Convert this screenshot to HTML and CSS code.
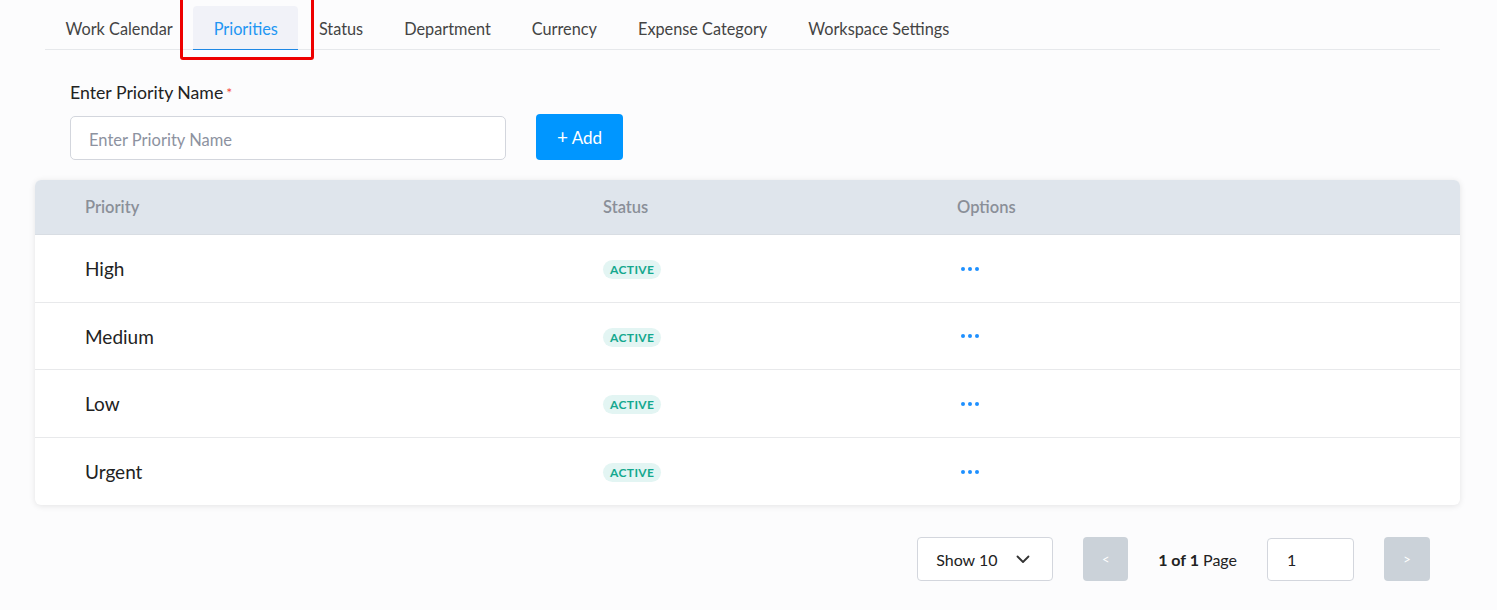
FILE: index.html
```html
<!DOCTYPE html>
<html lang="en">
<head>
<meta charset="utf-8">
<title>Priorities</title>
<link rel="stylesheet" href="styles.css">
</head>
<body>
<div class="page">
  <nav class="tabs">
    <div class="tab">Work Calendar</div>
    <div class="tab active">Priorities</div>
    <div class="tab">Status</div>
    <div class="tab">Department</div>
    <div class="tab">Currency</div>
    <div class="tab">Expense Category</div>
    <div class="tab">Workspace Settings</div>
  </nav>
  <div class="highlight"></div>

  <section class="form">
    <label class="label">Enter Priority Name<span class="req">*</span></label>
    <div class="form-row">
      <input class="text-input" type="text" placeholder="Enter Priority Name">
      <button class="add-btn"><span class="plus">+</span> Add</button>
    </div>
  </section>

  <div class="card">
    <div class="row head">
      <div class="c1">Priority</div>
      <div class="c2">Status</div>
      <div class="c3">Options</div>
    </div>
    <div class="row">
      <div class="c1 name">High</div>
      <div class="c2"><span class="badge">ACTIVE</span></div>
      <div class="c3"><svg class="dots" width="20" height="6" viewBox="0 0 20 6"><circle cx="3" cy="3" r="2"/><circle cx="10" cy="3" r="2"/><circle cx="17" cy="3" r="2"/></svg></div>
    </div>
    <div class="row">
      <div class="c1 name">Medium</div>
      <div class="c2"><span class="badge">ACTIVE</span></div>
      <div class="c3"><svg class="dots" width="20" height="6" viewBox="0 0 20 6"><circle cx="3" cy="3" r="2"/><circle cx="10" cy="3" r="2"/><circle cx="17" cy="3" r="2"/></svg></div>
    </div>
    <div class="row">
      <div class="c1 name">Low</div>
      <div class="c2"><span class="badge">ACTIVE</span></div>
      <div class="c3"><svg class="dots" width="20" height="6" viewBox="0 0 20 6"><circle cx="3" cy="3" r="2"/><circle cx="10" cy="3" r="2"/><circle cx="17" cy="3" r="2"/></svg></div>
    </div>
    <div class="row last">
      <div class="c1 name">Urgent</div>
      <div class="c2"><span class="badge">ACTIVE</span></div>
      <div class="c3"><svg class="dots" width="20" height="6" viewBox="0 0 20 6"><circle cx="3" cy="3" r="2"/><circle cx="10" cy="3" r="2"/><circle cx="17" cy="3" r="2"/></svg></div>
    </div>
  </div>

  <div class="pager">
    <div class="select">
      <span>Show 10</span>
      <svg width="14" height="9" viewBox="0 0 14 9"><path d="M1.5 1.5 L7 7 L12.5 1.5" fill="none" stroke="#333" stroke-width="1.8" stroke-linecap="round" stroke-linejoin="round"/></svg>
    </div>
    <button class="nav-btn">&lt;</button>
    <div class="page-info"><b>1 of 1</b> Page</div>
    <input class="page-input" type="text" value="1">
    <button class="nav-btn">&gt;</button>
  </div>
</div>
</body>
</html>
```

FILE: styles.css
```css
* { box-sizing: border-box; }
html, body { margin: 0; padding: 0; }
body {
  background: #fcfcfd;
  font-family: Lato, "Open Sans", "Liberation Sans", sans-serif;
  color: #222;
}
.page {
  position: relative;
  padding: 6px 37px 0 35px;
}
.tabs {
  display: flex;
  margin: 0 20px 0 10px;
  border-bottom: 1px solid #e6e8eb;
  height: 44px;
}
.tab {
  padding: 2px 20.5px 0;
  height: 43px;
  display: flex;
  align-items: center;
  font-size: 16.3px;
  color: #444;
  white-space: nowrap;
}
.tab.active {
  background: #f1f2f8;
  color: #2196f3;
  border-radius: 4px 4px 0 0;
  border-bottom: 1px solid #1e88e5;
  height: 44px;
  padding-top: 1px;
}
.highlight {
  position: absolute;
  left: 180px;
  top: -4px;
  width: 134px;
  height: 64px;
  border: 3px solid #ee0000;
  border-radius: 3px;
}
.form {
  padding: 0 35px;
}
.label {
  display: block;
  margin-top: 33px;
  line-height: 20px;
  font-size: 17.7px;
  color: #222;
}
.req {
  color: #f4493b;
  font-size: 14px;
  vertical-align: top;
  margin-left: 3px;
}
.form-row {
  display: flex;
  align-items: flex-end;
  margin-top: 11px;
}
.text-input {
  width: 436px;
  height: 44px;
  border: 1px solid #d3d6dd;
  border-radius: 5px;
  background: #fff;
  padding: 3px 18px 0;
  font-family: inherit;
  font-size: 16.5px;
  color: #222;
  outline: none;
}
.text-input::placeholder { color: #8d92a0; }
.add-btn {
  margin-left: 30px;
  width: 87px;
  height: 46px;
  border: 0;
  border-radius: 4px;
  background: #0096ff;
  color: #fff;
  font-family: inherit;
  font-size: 17px;
  padding: 0 0 2px;
}
.plus { font-size: 19px; }
.card {
  margin-top: 20px;
  background: #fff;
  border-radius: 6px;
  box-shadow: 0 1px 6px rgba(0,0,0,0.10);
  overflow: hidden;
}
.row {
  display: grid;
  grid-template-columns: 518px 354px 1fr;
  padding-left: 50px;
  height: 67.5px;
  align-items: center;
  border-bottom: 1px solid #e8e9eb;
  padding-top: 1px;
}
.row.last { border-bottom: 0; }
.row.head {
  background: #dfe5ec;
  height: 55px;
  color: #8a8f98;
  font-weight: 600;
  font-size: 16.5px;
  border-bottom: 1px solid #d8dde3;
  padding-top: 0;
}
.name {
  font-size: 19px;
  color: #222;
}
.badge {
  display: inline-block;
  background: #e3f5f3;
  color: #14a88e;
  font-size: 12px;
  font-weight: 700;
  letter-spacing: 0.4px;
  padding: 4px 7px 3px;
  border-radius: 10px;
  line-height: 12px;
}
.dots {
  display: block;
  fill: #1e90ff;
  margin-left: 3px;
}
.pager {
  display: flex;
  justify-content: flex-end;
  align-items: center;
  gap: 30px;
  margin-top: 32px;
  padding-right: 30px;
}
.select {
  width: 136px;
  height: 44px;
  border: 1px solid #d3d6dd;
  border-radius: 4px;
  background: #fff;
  display: flex;
  align-items: center;
  justify-content: space-between;
  padding: 0 22px 0 18px;
  font-size: 16px;
  color: #222;
}
.nav-btn {
  width: 45px;
  height: 44px;
  border: 0;
  border-radius: 4px;
  background: #cbd2d9;
  color: #fff;
  font-family: inherit;
  font-size: 13px;
  padding: 0;
}
.nav-btn:last-child { width: 46px; }
.page-info {
  font-size: 16px;
  color: #222;
}
.page-info b { font-weight: 700; }
.page-input {
  width: 87px;
  height: 43px;
  border: 1px solid #d3d6dd;
  border-radius: 4px;
  background: #fff;
  padding: 0 19px;
  font-family: inherit;
  font-size: 16px;
  color: #222;
  outline: none;
}
```
